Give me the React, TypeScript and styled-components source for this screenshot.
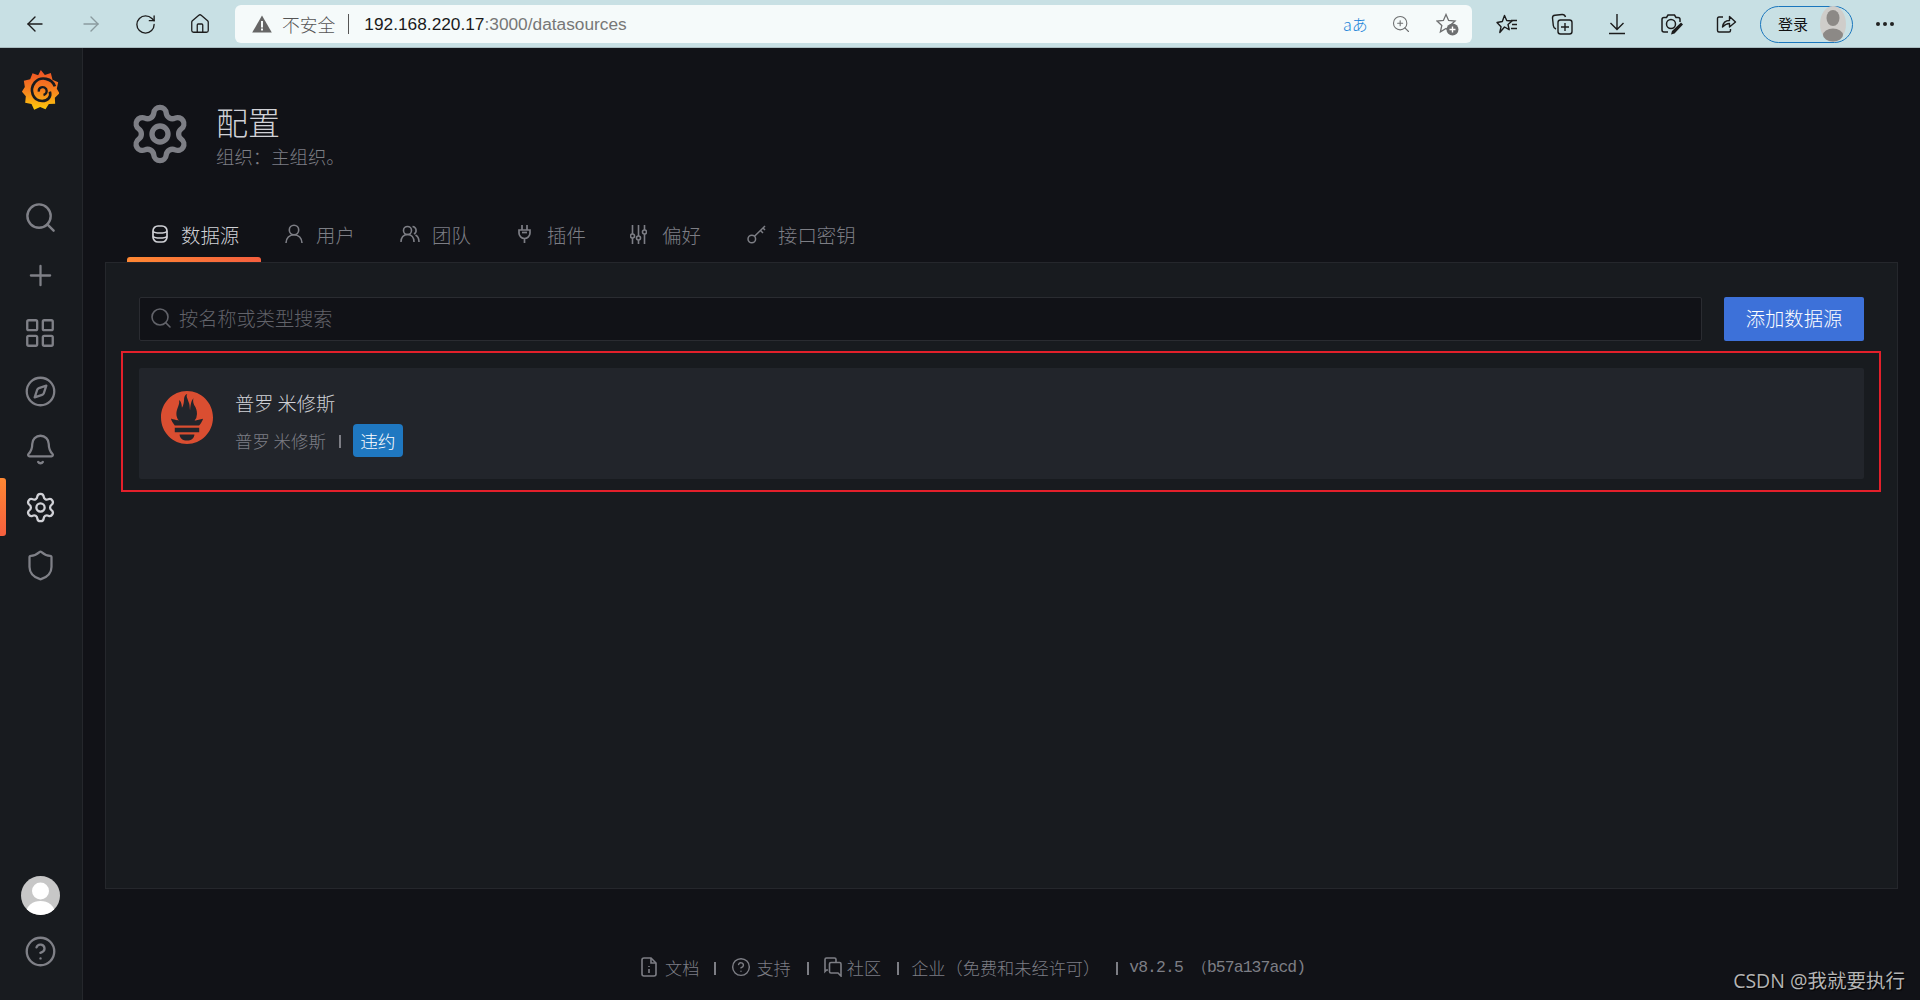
import React from 'react';
import styled, { createGlobalStyle } from 'styled-components';
import {
  ArrowLeft,
  ArrowRight,
  RotateCw,
  Home,
  ZoomIn,
  Search,
  Plus,
  LayoutGrid,
  Compass,
  Bell,
  Settings,
  Shield,
  CircleHelp,
} from 'lucide-react';

const CJK = `"Noto Sans CJK SC", "Liberation Sans", sans-serif`;

const GlobalStyle = createGlobalStyle`
  html, body { margin: 0; padding: 0; background: #111217; }
  body { font-family: ${CJK}; overflow: hidden; }
  * { box-sizing: border-box; }
`;

const Page = styled.div`
  position: relative;
  width: 1920px;
  height: 1000px;
  display: flex;
  flex-direction: column;
  overflow: hidden;
`;

/* browser chrome */
const Chrome = styled.div`
  height: 48px;
  flex: none;
  display: flex;
  align-items: center;
  background: #c8e0e4;
  border-bottom: 1px solid #a9bcc0;
  padding: 1px 0 0 5px;
`;
const ChromeBtn = styled.div<{ $w: number; $muted?: boolean }>`
  width: ${(p) => p.$w}px;
  flex: none;
  display: flex;
  justify-content: center;
  color: ${(p) => (p.$muted ? '#8a9a9e' : '#1c1c1c')};
`;
const AddressBar = styled.div`
  width: 1237px;
  height: 38px;
  flex: none;
  margin: 0 7px 0 8px;
  background: #f5fafa;
  border-radius: 6px;
  display: flex;
  align-items: center;
  padding-left: 17px;
  font-size: 17.8px;
  font-weight: 300;
`;
const NotSecure = styled.span`
  margin-left: 10px;
  color: #555;
`;
const UrlSep = styled.span`
  width: 1px;
  height: 20px;
  background: #555;
  margin: 0 15px 0 13px;
`;
const Url = styled.span`
  font-family: "Liberation Sans", sans-serif;
  font-size: 17.3px;
  color: #1a1a1a;
  flex: 1;
`;
const UrlRest = styled.span`
  color: #777;
`;
const Translate = styled.span`
  color: #1a83d8;
  font-size: 16px;
  width: 24px;
  margin-right: 24px;
  white-space: nowrap;
`;
const AddressIcon = styled.div<{ $mr: number }>`
  display: flex;
  margin-right: ${(p) => p.$mr}px;
  color: #6d6f70;
`;
const LoginPill = styled.div`
  width: 93px;
  height: 37px;
  flex: none;
  margin-left: 6px;
  border: 1.5px solid #1a76bd;
  border-radius: 19px;
  display: flex;
  align-items: center;
  padding: 0 0 2px 17px;
  font-size: 15px;
  color: #111;
`;
const LoginAvatar = styled.div`
  margin: 2px 0 0 12px;
  display: flex;
`;
const Dots = styled.div`
  margin-left: 23px;
  display: flex;
  gap: 3px;
  width: 20px;
  span {
    width: 4px;
    height: 4px;
    border-radius: 50%;
    background: #222;
  }
`;

/* grafana shell */
const Shell = styled.div`
  flex: 1;
  display: flex;
  min-height: 0;
`;
const SideNav = styled.nav`
  width: 83px;
  flex: none;
  background: #181b1f;
  border-right: 1px solid #25272c;
  padding-right: 2px;
  display: flex;
  flex-direction: column;
  align-items: center;
`;
const LogoWrap = styled.div`
  height: 45px;
  margin-top: 21px;
  margin-bottom: 74px;
  display: flex;
`;
const NavItem = styled.div<{ $active?: boolean }>`
  position: relative;
  width: 100%;
  height: 58px;
  flex: none;
  display: flex;
  align-items: center;
  justify-content: center;
  color: ${(p) => (p.$active ? '#d0d1d6' : '#7f8087')};
  &::before {
    content: '';
    display: ${(p) => (p.$active ? 'block' : 'none')};
    position: absolute;
    left: 0;
    top: 0;
    width: 6px;
    height: 58px;
    border-radius: 0 3px 3px 0;
    background: linear-gradient(0deg, #f55f3e, #ff8833);
  }
`;
const NavBottom = styled.div`
  margin-top: auto;
  padding-bottom: 32px;
  display: flex;
  flex-direction: column;
  align-items: center;
  gap: 20px;
  color: #7f8087;
`;

const Main = styled.main`
  flex: 1;
  min-width: 0;
  padding: 0 22px;
  display: flex;
  flex-direction: column;
`;
const Header = styled.header`
  display: flex;
  align-items: flex-start;
  height: 162px;
  padding: 54px 0 0 23px;
  color: #7d7e85;
`;
const HeaderText = styled.div`
  margin-left: 24px;
  font-weight: 300;
`;
const PageTitle = styled.h1`
  margin: 0;
  font-size: 32px;
  font-weight: 300;
  line-height: 38px;
  color: #d0d1d6;
`;
const PageSub = styled.div`
  margin-top: 4px;
  font-size: 18.4px;
  line-height: 24px;
  color: #7d7e85;
`;
const Tabs = styled.div`
  height: 52px;
  display: flex;
  padding-left: 22px;
`;
const Tab = styled.div<{ $active?: boolean; $w: number; $gap?: number }>`
  position: relative;
  width: ${(p) => p.$w}px;
  flex: none;
  display: flex;
  align-items: center;
  padding: 0 0 4px 23px;
  gap: ${(p) => p.$gap ?? 12}px;
  font-size: 19.4px;
  font-weight: 300;
  white-space: nowrap;
  color: ${(p) => (p.$active ? '#d0d1d6' : '#7d7e85')};
  &::after {
    content: '';
    display: ${(p) => (p.$active ? 'block' : 'none')};
    position: absolute;
    left: 0;
    right: 0;
    bottom: 0;
    height: 5px;
    border-radius: 3px 3px 0 0;
    background: linear-gradient(90deg, #ff8833, #f55f3e);
  }
`;
const Panel = styled.section`
  height: 627px;
  flex: none;
  background: #181b1f;
  border: 1px solid #25272c;
  padding: 34px 33px 0 33px;
`;
const ToolRow = styled.div`
  display: flex;
  gap: 22px;
`;
const SearchBox = styled.div`
  flex: 1;
  height: 44px;
  background: #111217;
  border: 1px solid #2a2c31;
  border-radius: 2px;
  display: flex;
  align-items: center;
  padding: 0 0 2px 9px;
  gap: 6px;
  font-size: 19.2px;
  font-weight: 300;
  color: #62636a;
`;
const AddButton = styled.button`
  width: 140px;
  height: 44px;
  flex: none;
  border: 0;
  border-radius: 2px;
  background: #3d71d9;
  color: #fff;
  font-family: inherit;
  font-size: 19.3px;
  font-weight: 300;
  padding: 0 0 2px;
`;
const RedFrame = styled.div`
  margin: 10px -17px 0 -18px;
  border: 2px solid #e3202b;
  padding: 15px 15px 11px 16px;
`;
const Card = styled.div`
  height: 111px;
  background: #22252b;
  border-radius: 2px;
  display: flex;
  align-items: center;
  padding-left: 22px;
`;
const CardLogo = styled.div`
  display: flex;
  margin-top: -13px;
`;
const CardBody = styled.div`
  margin-left: 22px;
  font-weight: 300;
`;
const CardTitle = styled.div`
  font-size: 19.2px;
  line-height: 24px;
  color: #d0d1d6;
  white-space: pre;
`;
const CardMeta = styled.div`
  display: flex;
  align-items: center;
  margin-top: 9px;
  font-size: 17.4px;
  color: #7d7e85;
  white-space: pre;
`;
const MetaSep = styled.span`
  width: 2px;
  height: 13px;
  background: #7d7e85;
  margin: 2px 12px 0 13px;
`;
const Badge = styled.span`
  width: 50px;
  height: 33px;
  background: #1f78c1;
  border-radius: 4px;
  color: #fff;
  font-size: 17.6px;
  display: flex;
  align-items: center;
  justify-content: center;
`;
const Footer = styled.footer`
  display: flex;
  align-items: center;
  height: 40px;
  margin-top: 58px;
  padding-left: 536px;
  font-size: 17.2px;
  font-weight: 300;
  color: #7d7e85;
  white-space: pre;
`;
const FootLink = styled.span<{ $gap?: number }>`
  display: flex;
  align-items: center;
  gap: ${(p) => p.$gap ?? 6}px;
`;
const FootSep = styled.span<{ $l: number; $r: number }>`
  width: 2px;
  height: 13px;
  flex: none;
  background: #7d7e85;
  margin: 2px ${(p) => p.$r}px 0 ${(p) => p.$l}px;
`;
const Version = styled.span`
  font-family: "Liberation Mono", monospace;
  font-size: 16.4px;
  letter-spacing: -0.9px;
`;
const Watermark = styled.div`
  position: absolute;
  right: 15px;
  bottom: 6px;
  font-family: "Open Sans", ${CJK};
  font-size: 19.5px;
  line-height: 26px;
  color: #b4b4b4;
  text-shadow: 1px 1px 1px #000;
`;

const GrafanaLogo: React.FC = () => (
  <svg width="37" height="42" viewBox="28 22 110 126">
    <defs>
      <linearGradient id="gfLogo" x1="0" y1="0" x2="0" y2="1">
        <stop offset="0" stopColor="#ee4f26" />
        <stop offset="0.55" stopColor="#f7861e" />
        <stop offset="1" stopColor="#fbca0a" />
      </linearGradient>
    </defs>
    <path
      d="M84 25l12 15 18-6 5 20 17 8-4 19 8 14-14 13 1 18-19 1-10 16-16-7-18 8-8-17-19-4 2-19-12-14 9-14-3-19 19-4 7-18 17 6z"
      fill="url(#gfLogo)"
    />
    <path
      d="M126 74C118 50 84 42 66 62C48 85 60 118 88 118C106 118 116 104 111 90"
      fill="none"
      stroke="#181b1f"
      strokeWidth="8"
    />
    <path d="M78 90C76 76 92 72 100 82C104 90 100 98 92 100" fill="none" stroke="#181b1f" strokeWidth="7" />
  </svg>
);

const PrometheusLogo: React.FC = () => (
  <svg width="52" height="53" viewBox="0 0 24 24" preserveAspectRatio="none" fill="#da4e31">
    <path d="M12 0C5.373 0 0 5.372 0 12c0 6.627 5.373 12 12 12s12-5.373 12-12c0-6.628-5.373-12-12-12zm0 22.46c-1.885 0-3.414-1.26-3.414-2.814h6.828c0 1.553-1.528 2.813-3.414 2.813zm5.64-3.745H6.36v-2.046h11.28v2.046zm-.04-3.098H6.391c-.037-.043-.075-.086-.111-.13-1.155-1.401-1.427-2.133-1.69-2.879-.005-.025 1.4.287 2.395.511 0 0 .513.119 1.262.255-.72-.843-1.147-1.915-1.147-3.01 0-2.406 1.845-4.508 1.18-6.207.648.053 1.34 1.367 1.387 3.422.689-.951.977-2.69.977-3.755 0-1.103.727-2.385 1.454-2.429-.648 1.069.168 1.984.894 4.256.272.854.237 2.29.447 3.201.07-1.892.395-4.652 1.595-5.605-.529 1.2.079 2.702.494 3.424.671 1.164 1.078 2.047 1.078 3.716a4.642 4.642 0 01-1.11 2.996c.792-.149 1.34-.283 1.34-.283l2.573-.502s-.374 1.538-1.81 3.019z" />
  </svg>
);

const WarnIcon: React.FC = () => (
  <svg width="20" height="18" viewBox="0 0 20 18">
    <path d="M10 0.5 19.8 17.5H.2z" fill="#666" />
    <rect x="9" y="6" width="2" height="6.5" fill="#f5fafa" />
    <rect x="9" y="13.5" width="2" height="2" fill="#f5fafa" />
  </svg>
);

const StarAdd: React.FC = () => (
  <svg width="23" height="23" viewBox="0 0 23 23">
    <path d="M10 1.5l2.6 6 6.4.6-4.8 4.3 1.4 6.4L10 15.4l-5.6 3.4 1.4-6.4L1 8.1l6.4-.6z" fill="none" stroke="#6d6f70" strokeWidth="1.3" />
    <circle cx="16.5" cy="16.5" r="6" fill="#6d6f70" />
    <path d="M16.5 13.5v6M13.5 16.5h6" stroke="#fff" strokeWidth="1.4" />
  </svg>
);

const FavList: React.FC = () => (
  <svg width="22" height="20" viewBox="0 0 22 20" fill="none" stroke="#1c1c1c" strokeWidth="1.4">
    <path d="M8.500 1.500l2.200 5 5.300.5-4 3.500 1.200 5.200-4.700-2.700L3.800 18.500l1.200-5.700L1 8.500l5.300-1z" strokeLinejoin="round" />
    <path d="M15 6.500h6M16 10.500h5M15 14.500h6" />
  </svg>
);

const Collections: React.FC = () => (
  <svg width="22" height="22" viewBox="0 0 22 22" fill="none" stroke="#1c1c1c" strokeWidth="1.4">
    <path d="M5 16Q2.500 15 2.300 12.500L1.500 5Q1.300 2.500 4 2.200L11 1.500Q13.800 1.300 14.500 4" />
    <rect x="7" y="7" width="14" height="14" rx="2.500" />
    <path d="M14 10v8M10 14h8" />
  </svg>
);

const DownloadBar: React.FC = () => (
  <svg width="18" height="22" viewBox="0 0 18 22" fill="none" stroke="#1c1c1c" strokeWidth="1.4">
    <path d="M9 1v15M2.500 10L9 16.500 15.500 10M1 20.500h16" />
  </svg>
);

const CameraEdit: React.FC = () => (
  <svg width="24" height="22" viewBox="0 0 24 22" fill="none" stroke="#1c1c1c" strokeWidth="1.5">
    <path d="M20 9V6.500Q20 4.500 18 4.500H16L14.500 2H8L6.500 4.500H4Q2 4.500 2 6.500V17Q2 19 4 19H8" />
    <circle cx="11" cy="11" r="4.500" />
    <path d="M21 9.500l2 2-8.500 9-3.500 1 1-3.500z" fill="#1c1c1c" stroke="none" />
  </svg>
);

const ShareBox: React.FC = () => (
  <svg width="21" height="20" viewBox="0 0 21 20" fill="none" stroke="#1c1c1c" strokeWidth="1.4">
    <path d="M7 3H3Q1.500 3 1.500 4.500v12Q1.500 18 3 18h10q1.500 0 1.500-1.500V15" />
    <path d="M6.500 13c.5-4 3-6.500 7-6.500V2.500l6 5.500-6 5V9.500c-3 0-5 1.500-7 3.500z" strokeLinejoin="round" />
  </svg>
);

const ProfileSmall: React.FC = () => (
  <svg width="26" height="36" viewBox="0 0 26 36">
    <ellipse cx="13" cy="18" rx="13" ry="18" fill="#cfcdca" />
    <ellipse cx="13" cy="12" rx="6.500" ry="8" fill="#8c8986" />
    <ellipse cx="13" cy="29" rx="10" ry="6.500" fill="#8c8986" />
  </svg>
);

const UserAvatar: React.FC = () => (
  <svg width="39" height="39" viewBox="0 0 39 39">
    <defs>
      <clipPath id="avatarClip">
        <circle cx="19.500" cy="19.500" r="19.500" />
      </clipPath>
    </defs>
    <g clipPath="url(#avatarClip)">
      <rect width="39" height="39" fill="#c7c7c7" />
      <circle cx="19.500" cy="15" r="8.500" fill="#fff" />
      <ellipse cx="19.500" cy="36" rx="14" ry="11" fill="#fff" />
    </g>
  </svg>
);

const DocIcon: React.FC = () => (
  <svg width="16" height="20" viewBox="0 0 16 20" fill="none" stroke="#7d7e85" strokeWidth="1.6">
    <path d="M10 1H3Q1 1 1 3v14q0 2 2 2h10q2 0 2-2V6z" />
    <path d="M10 1v5h5M8 9v1M8 12v4" />
  </svg>
);

const ChatIcon: React.FC = () => (
  <svg width="18" height="20" viewBox="0 0 18 20" fill="none" stroke="#7d7e85" strokeWidth="1.6">
    <path d="M4 13H2.500L1 14.500V2.500Q1 1 2.500 1h8Q12 1 12 2.500V5" />
    <path d="M7 5.500h8.500Q17 5.500 17 7v12l-3-3H7q-1.500 0-1.500-1.500V7Q5.500 5.500 7 5.500z" />
  </svg>
);

const DbIcon: React.FC = () => (
  <svg width="20" height="20" viewBox="-2 -1 20 20" fill="none" stroke="currentColor" strokeWidth="1.7">
    <rect x="1" y="1" width="14" height="16" rx="5" />
    <path d="M1 6.500c2 2 12 2 14 0M1 11.500c2 2 12 2 14 0" />
  </svg>
);

const UserIcon: React.FC = () => (
  <svg width="20" height="20" viewBox="0 0 20 20" fill="none" stroke="currentColor" strokeWidth="1.6">
    <circle cx="10" cy="6" r="4.700" />
    <path d="M2 19c0-5 3.500-8.300 8-8.300s8 3.300 8 8.300" />
  </svg>
);

const UsersIcon: React.FC = () => (
  <svg width="20" height="20" viewBox="0 0 20 20" fill="none" stroke="currentColor" strokeWidth="1.6">
    <circle cx="7.500" cy="6.500" r="4" />
    <path d="M1 18c0-4.500 2.500-7.500 6.500-7.500s6.500 3 6.500 7.500" />
    <path d="M12.500 2.500a4 4 0 0 1 1.500 7.500M15.500 11c2.300 1.200 3.500 3.700 3.500 7" />
  </svg>
);

const PlugIcon: React.FC = () => (
  <svg width="13" height="20" viewBox="0 0 13 20" fill="none" stroke="currentColor" strokeWidth="1.7">
    <path d="M4 1v5M9 1v5M1 6h11v3a5.500 5.500 0 0 1-11 0zM6.500 14.500V19" />
    <path d="M4 8.500h5" />
  </svg>
);

const SlidersIcon: React.FC = () => (
  <svg width="17" height="20" viewBox="0 0 17 20" fill="none" stroke="currentColor" strokeWidth="1.6">
    <path d="M2.500 1v19M8.500 1v19M14.500 1v19" />
    <circle cx="2.500" cy="12" r="2" fill="#111217" />
    <circle cx="8.500" cy="14" r="2" fill="#111217" />
    <circle cx="14.500" cy="8" r="2" fill="#111217" />
  </svg>
);

const KeyIcon: React.FC = () => (
  <svg width="19" height="20" viewBox="0 0 19 20" fill="none" stroke="currentColor" strokeWidth="1.5">
    <circle cx="4.800" cy="15" r="3.800" />
    <path d="M7.500 12.300L18 2M13.500 6.500l2.500 2.500M16 4l2 2" />
  </svg>
);

const nav: [typeof Search, number][] = [
  [Search, 35],
  [Plus, 33],
  [LayoutGrid, 34],
  [Compass, 33],
  [Bell, 33],
  [Settings, 33],
  [Shield, 33],
];

const App: React.FC = () => {
  return (
    <Page>
      <GlobalStyle />
      <Chrome>
        <ChromeBtn $w={60}><ArrowLeft size={24} strokeWidth={1.4} /></ChromeBtn>
        <ChromeBtn $w={52} $muted><ArrowRight size={24} strokeWidth={1.4} /></ChromeBtn>
        <ChromeBtn $w={56}><RotateCw size={23} strokeWidth={1.4} /></ChromeBtn>
        <ChromeBtn $w={54}><Home size={22} strokeWidth={1.4} /></ChromeBtn>
        <AddressBar>
          <WarnIcon />
          <NotSecure>不安全</NotSecure>
          <UrlSep />
          <Url>
            192.168.220.17<UrlRest>:3000/datasources</UrlRest>
          </Url>
          <Translate>aあ</Translate>
          <AddressIcon $mr={25}><ZoomIn size={20} strokeWidth={1.3} /></AddressIcon>
          <AddressIcon $mr={13}><StarAdd /></AddressIcon>
        </AddressBar>
        <ChromeBtn $w={55}><FavList /></ChromeBtn>
        <ChromeBtn $w={55}><Collections /></ChromeBtn>
        <ChromeBtn $w={55}><DownloadBar /></ChromeBtn>
        <ChromeBtn $w={55}><CameraEdit /></ChromeBtn>
        <ChromeBtn $w={55}><ShareBox /></ChromeBtn>
        <LoginPill>
          登录
          <LoginAvatar><ProfileSmall /></LoginAvatar>
        </LoginPill>
        <Dots><span /><span /><span /></Dots>
      </Chrome>
      <Shell>
        <SideNav>
          <LogoWrap><GrafanaLogo /></LogoWrap>
          {nav.map(([Icon, size], i) => (
            <NavItem key={i} $active={i === 5}>
              <Icon size={size} strokeWidth={1.65} />
            </NavItem>
          ))}
          <NavBottom>
            <UserAvatar />
            <CircleHelp size={33} strokeWidth={1.7} />
          </NavBottom>
        </SideNav>
        <Main>
          <Header>
            <Settings size={64} strokeWidth={2} />
            <HeaderText>
              <PageTitle>配置</PageTitle>
              <PageSub>组织：主组织。</PageSub>
            </HeaderText>
          </Header>
          <Tabs>
            <Tab $active $w={134} $gap={11}><DbIcon />数据源</Tab>
            <Tab $w={116}><UserIcon />用户</Tab>
            <Tab $w={118}><UsersIcon />团队</Tab>
            <Tab $w={112} $gap={16}><PlugIcon />插件</Tab>
            <Tab $w={117} $gap={15}><SlidersIcon />偏好</Tab>
            <Tab $w={140}><KeyIcon />接口密钥</Tab>
          </Tabs>
          <Panel>
            <ToolRow>
              <SearchBox>
                <Search size={24} strokeWidth={1.6} />
                按名称或类型搜索
              </SearchBox>
              <AddButton>添加数据源</AddButton>
            </ToolRow>
            <RedFrame>
              <Card>
                <CardLogo><PrometheusLogo /></CardLogo>
                <CardBody>
                  <CardTitle>普罗 米修斯</CardTitle>
                  <CardMeta>
                    普罗 米修斯
                    <MetaSep />
                    <Badge>违约</Badge>
                  </CardMeta>
                </CardBody>
              </Card>
            </RedFrame>
          </Panel>
          <Footer>
            <FootLink $gap={8}><DocIcon />文档</FootLink>
            <FootSep $l={15} $r={15} />
            <FootLink $gap={5}><CircleHelp size={20} strokeWidth={1.7} />支持</FootLink>
            <FootSep $l={16} $r={15} />
            <FootLink $gap={5}><ChatIcon />社区</FootLink>
            <FootSep $l={16} $r={12} />
            <FootLink>企业（免费和未经许可）</FootLink>
            <FootSep $l={16} $r={11} />
            <Version>v8.2.5 （b57a137acd)</Version>
          </Footer>
        </Main>
      </Shell>
      <Watermark>CSDN @我就要执行</Watermark>
    </Page>
  );
};

export default App;
